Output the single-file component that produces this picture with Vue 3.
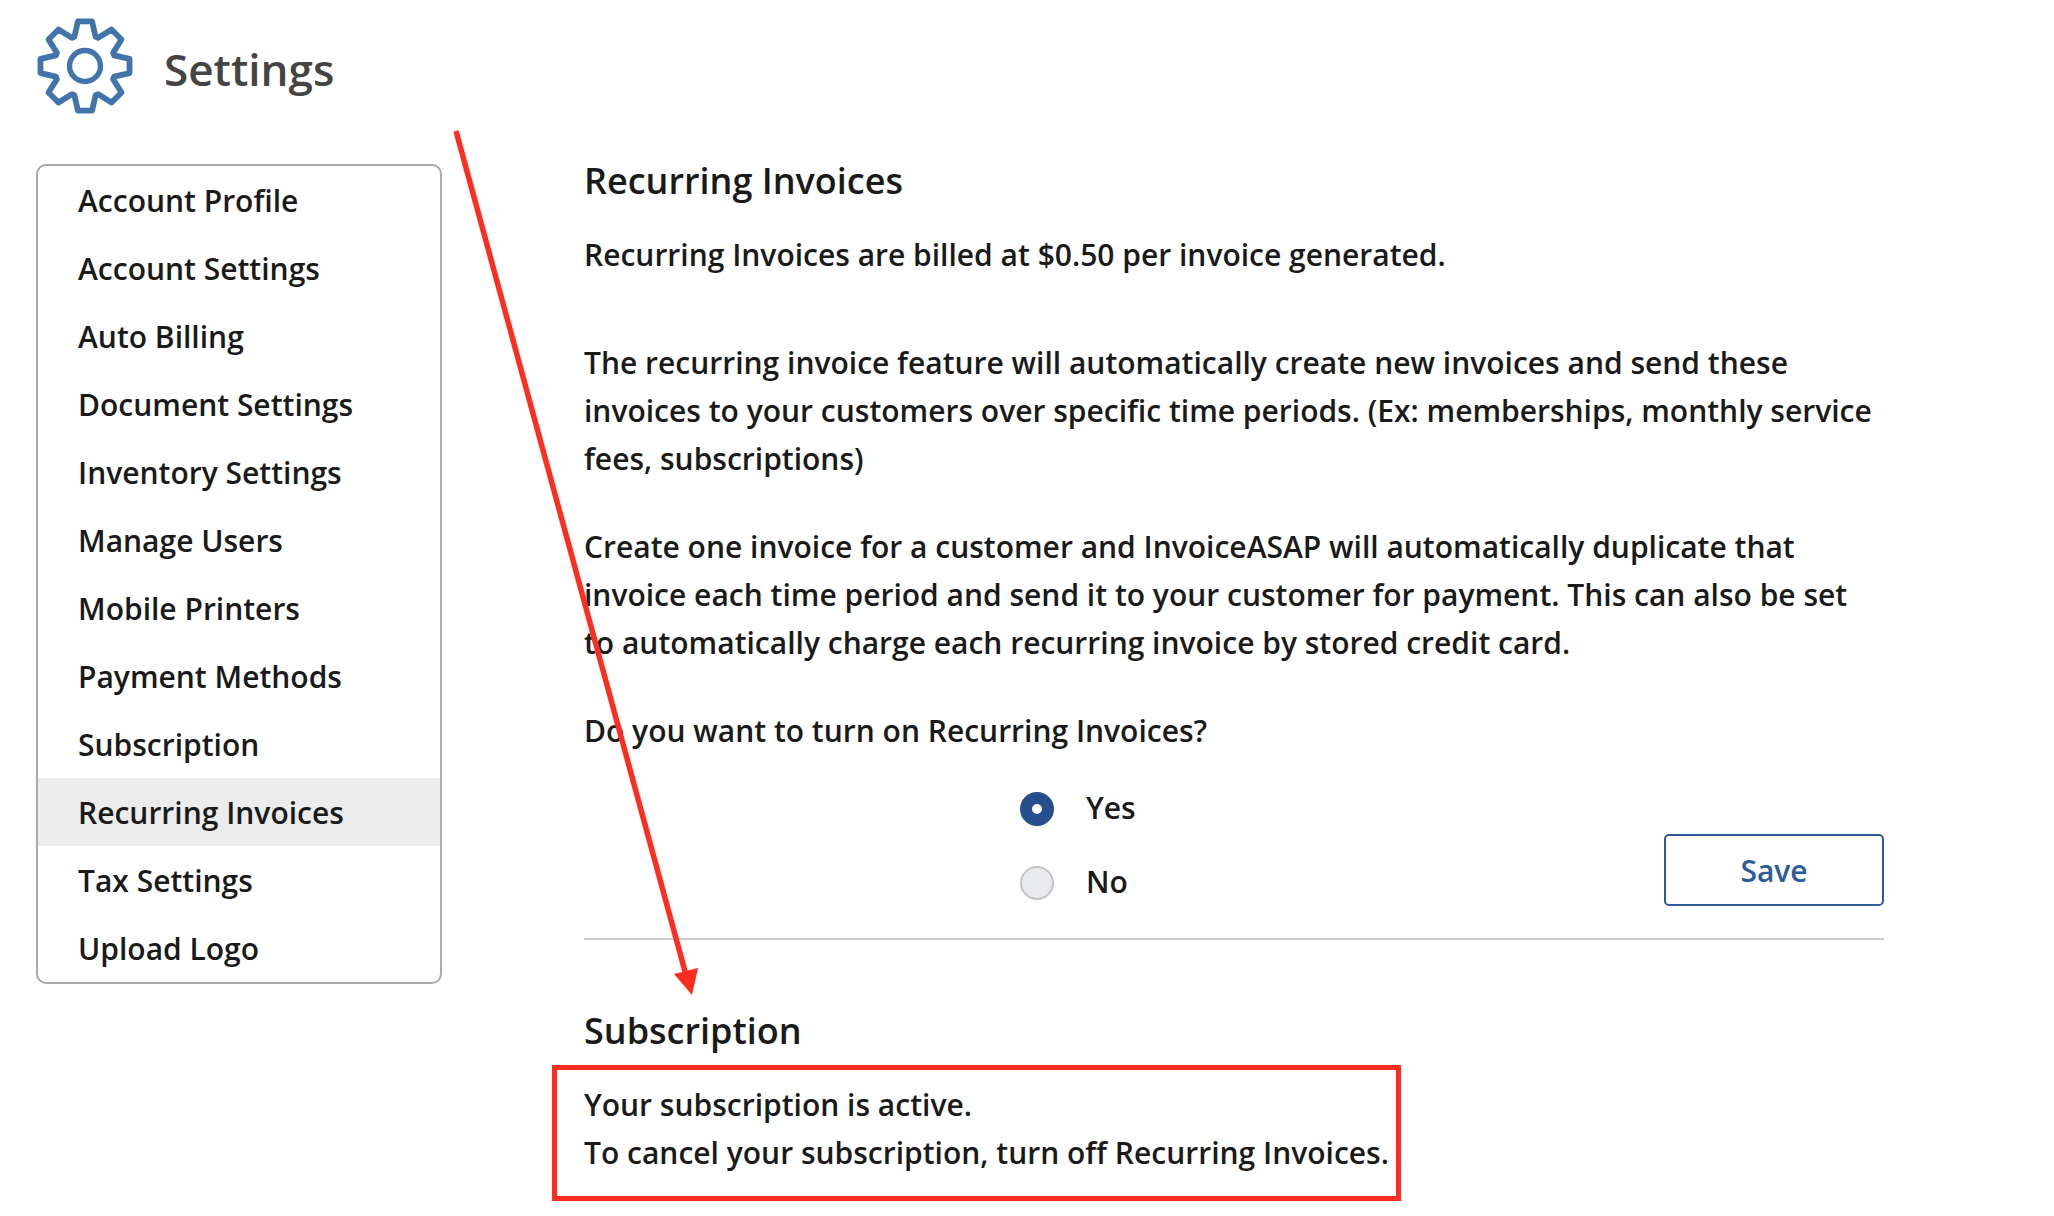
<template>
  <div class="page">
    <header class="page-head">
      <svg class="gear" width="100" height="100" viewBox="0 0 100 100">
        <path :d="gearPath" fill="none" stroke="#4174aa" stroke-width="5.8" stroke-linejoin="round" />
        <circle cx="50" cy="50" r="15.5" fill="none" stroke="#4174aa" stroke-width="5.4" />
      </svg>
      <h1>Settings</h1>
    </header>

    <div class="columns">
      <nav class="side">
        <a v-for="item in menu" :key="item" class="side-item" :class="{ active: item === 'Recurring Invoices' }">{{ item }}</a>
      </nav>

      <main class="content">
        <h2>Recurring Invoices</h2>
        <p class="price">Recurring Invoices are billed at $0.50 per invoice generated.</p>
        <p class="para first">The recurring invoice feature will automatically create new invoices and send these invoices to your customers over specific time periods. (Ex: memberships, monthly service fees, subscriptions)</p>
        <p class="para second">Create one invoice for a customer and InvoiceASAP will automatically duplicate that invoice each time period and send it to your customer for payment. This can also be set to automatically charge each recurring invoice by stored credit card.</p>
        <p class="para question">Do you want to turn on Recurring Invoices?</p>

        <div class="choice">
          <div class="radios">
            <label class="radio-row">
              <span class="radio on"></span>
              <span class="yes">Yes</span>
            </label>
            <label class="radio-row">
              <span class="radio"></span>
              <span class="no">No</span>
            </label>
          </div>
          <button class="save">Save</button>
        </div>

        <hr class="rule" />

        <h2 class="sub-title">Subscription</h2>
        <div class="sub-text">
          <p>Your subscription is active.</p>
          <p>To cancel your subscription, turn off Recurring Invoices.</p>
          <div class="mark-box"></div>
        </div>
      </main>
    </div>

    <!-- annotation drawn over the page -->
    <svg class="arrow" width="2054" height="1216" viewBox="0 0 2054 1216">
      <line x1="456" y1="131" x2="686" y2="975" stroke="#ff2d20" stroke-width="5.5" />
      <polygon points="692,995 674,974 698,968" fill="#ff2d20" />
    </svg>
  </div>
</template>

<script setup>
const menu = [
  'Account Profile',
  'Account Settings',
  'Auto Billing',
  'Document Settings',
  'Inventory Settings',
  'Manage Users',
  'Mobile Printers',
  'Payment Methods',
  'Subscription',
  'Recurring Invoices',
  'Tax Settings',
  'Upload Logo',
]

function pt(r, deg) {
  const a = (deg * Math.PI) / 180
  return (50 + r * Math.sin(a)).toFixed(2) + ' ' + (50 - r * Math.cos(a)).toFixed(2)
}

// 8 teeth, one pointing straight up
let d = ''
for (let i = 0; i < 8; i++) {
  const c = i * 45
  d += (i === 0 ? 'M' : 'L') + pt(31, c - 20)
  d += ' L' + pt(45.1, c - 9) + ' L' + pt(45.1, c + 9) + ' L' + pt(31, c + 20)
  d += ' A31 31 0 0 1 ' + pt(31, c + 25) + ' '
}
const gearPath = d + 'Z'
</script>

<style>
body {
  background: #fff;
}
</style>

<style scoped>
.page {
  position: relative;
  width: 2054px;
  height: 1216px;
  overflow: hidden;
  background: #fff;
  font-family: "Open Sans", sans-serif;
  color: #1a1a1a;
  font-size: 30px;
  -webkit-font-smoothing: antialiased;
}
.page-head {
  display: flex;
  align-items: center;
  height: 132px;
  padding-left: 35px;
  gap: 29px;
}
.gear {
  flex: none;
  width: 100px;
  height: 100px;
}
h1 {
  margin: 6px 0 0;
  font-size: 44px;
  font-weight: 600;
  color: #444;
}
.columns {
  display: flex;
  align-items: flex-start;
  padding-top: 32px;
}
.side {
  flex: none;
  width: 406px;
  margin-left: 36px;
  box-sizing: border-box;
  border: 2px solid #aaa;
  border-radius: 10px;
  overflow: hidden;
  display: flex;
  flex-direction: column;
}
.side-item {
  height: 68px;
  line-height: 70px;
  padding-left: 40px;
  font-weight: 600;
}
.side-item.active {
  background: #ececec;
}
.content {
  width: 1300px;
  margin-left: 142px;
  margin-top: -8px;
  font-weight: 600;
}
h2 {
  margin: 0;
  font-size: 36px;
  line-height: 50px;
  font-weight: 600;
}
p {
  margin: 0;
  line-height: 48px;
}
.price {
  margin-top: 25px;
}
.para.first {
  margin-top: 60px;
}
.para.second {
  margin-top: 40px;
}
.para.question {
  margin-top: 40px;
}
.choice {
  display: flex;
  justify-content: space-between;
  align-items: flex-end;
  margin-top: 23px;
  height: 128px;
}
.radios {
  display: flex;
  flex-direction: column;
  gap: 40px;
  margin-left: 436px;
  margin-bottom: 6px;
}
.radio-row {
  display: flex;
  align-items: center;
  gap: 31px;
  height: 34px;
}
.radio {
  width: 34px;
  height: 34px;
  box-sizing: border-box;
  border-radius: 50%;
  border: 2px solid #c4c4c4;
  background: #e9eaee;
}
.radio.on {
  border: 12px solid #254e8d;
  background: #fff;
}
.yes {
  margin: -4px 0 0 1px;
}
.no {
  margin: -4px 0 0 1px;
}
.save {
  width: 220px;
  height: 72px;
  box-sizing: border-box;
  background: #fff;
  border: 2px solid #2d5c98;
  border-radius: 5px;
  color: #2d5c98;
  font-family: inherit;
  font-size: 30px;
  font-weight: 600;
}
.rule {
  margin: 32px 0 0;
  border: 0;
  height: 2px;
  background: #ccc;
}
.sub-title {
  margin-top: 66px;
}
.sub-text {
  position: relative;
  margin-top: 25px;
}
.mark-box {
  position: absolute;
  left: -32px;
  top: -16px;
  width: 849px;
  height: 136px;
  box-sizing: border-box;
  border: 5px solid #ff2d20;
}
.arrow {
  position: absolute;
  left: 0;
  top: 0;
  pointer-events: none;
}
</style>
